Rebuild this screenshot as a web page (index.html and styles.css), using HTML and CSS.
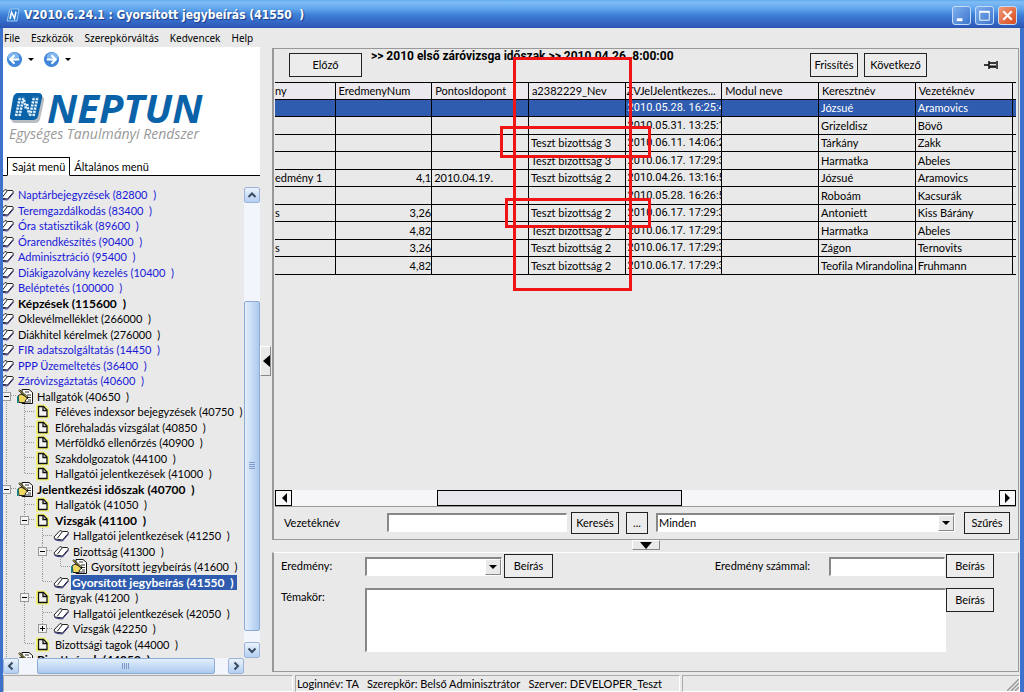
FILE: index.html
```html
<!DOCTYPE html>
<html lang="hu">
<head>
<meta charset="utf-8">
<title>Gyorsított jegybeírás</title>
<link rel="stylesheet" href="styles.css">
</head>
<body>
<svg class="defs" aria-hidden="true">
  <symbol id="book" viewBox="0 0 16 15">
    <path d="M1 9 L7 2.500 L9.500 3.500 L14.500 3.500 L15.500 5 L9.500 12 L6 11.500 L2 11 Z" fill="#fff" stroke="#222"/>
    <path d="M9.500 3.500 L4.500 10" fill="none" stroke="#222"/>
    <path d="M1.500 11.500 L5 12.500 L9.500 13 L15.500 6" fill="none" stroke="#2b2b7a"/>
  </symbol>
  <symbol id="doc" viewBox="0 0 16 15">
    <path d="M1.500 1 H9.500 L13.500 5 V14 H1.500 Z" fill="#fbfb8c" stroke="#f4f43c" stroke-dasharray="2 1"/>
    <path d="M3.500 2.500 H8.500 L12 6 V12.500 H3.500 Z" fill="#f4f4f4" stroke="#111" stroke-width="1.300"/>
    <path d="M8 2.500 V6.500 H12" fill="none" stroke="#111" stroke-width="1.300"/>
  </symbol>
  <symbol id="hand" viewBox="0 0 16 15">
    <path d="M5 .5 H12 L15.500 3.500 V14.500 H5 Z" fill="#fff" stroke="#111"/>
    <path d="M8 3 H12 M10 6 H14 M11 8.500 H14 M11 11 H14 M8 13 H14" stroke="#333"/>
    <path d="M1 7 L4 5 L8 7 L11 9 L8.500 11 L8 13.500 H2 Z" fill="#f0d860" stroke="#222"/>
    <path d="M2 1 L11 9" stroke="#111" stroke-width="2"/>
    <path d="M2 1 L10 8" stroke="#e6d84a" stroke-width=".8"/>
    <path d="M.5 7 V14" stroke="#138a8a" stroke-width="2"/>
  </symbol>
  <symbol id="mark" viewBox="0 0 36 32">
    <path d="M9 4 H31 Q36 4 35 9 L31 27 Q30 31 26 31 H6 Q2 31 3 27 Z" fill="#b9bec4"/>
    <path d="M9 1 H29 Q34 1 33 6 L29 24 Q28 28 24 28 H4 Q0 28 1 24 L4 6 Q5 1 9 1 Z" fill="#0a63a8"/>
    <path d="M7 24 L11 5 M10.500 24 L14.500 5 M15 8 L17 17 M18 12 L20 22 M21 24 L25 5 M24.500 24 L28.500 5" stroke="#e2f1fc" stroke-width="2.600" stroke-dasharray="2.200 1" fill="none"/>
  </symbol>
  <symbol id="mini" viewBox="0 0 14 14">
    <path d="M4 1 H13 L11 13 H1 Z" fill="#2f7fd0" stroke="#9cc8f4"/>
    <path d="M4 11 L5.500 4 L8.500 10.500 L10 3.500" fill="none" stroke="#fff" stroke-width="1.500"/>
  </symbol>
  <symbol id="nav" viewBox="0 0 18 18">
    <circle cx="9" cy="9" r="8" fill="#3f86d8"/>
    <ellipse cx="8" cy="6" rx="6" ry="4.500" fill="#7fb5ee"/>
    <path d="M14 9 H5 M9 4.500 L4.500 9 L9 13.500" fill="none" stroke="#fff" stroke-width="2.200"/>
  </symbol>
</svg>
<div class="window">
  <header class="titlebar">
    <svg class="app-icon"><use href="#mini"/></svg>
    <h1>V2010.6.24.1 : Gyorsított jegybeírás (41550  )</h1>
    <button class="win" aria-label="Kis méret"><svg viewBox="0 0 18 18"><path d="M4 13.500 H10" stroke="#fff" stroke-width="3"/></svg></button>
    <button class="win" aria-label="Teljes méret"><svg viewBox="0 0 18 18"><path d="M4 5 H14 V14 H4 Z" fill="none" stroke="#fff"/><path d="M3.500 5 H14.500" stroke="#fff" stroke-width="2"/></svg></button>
    <button class="win close" aria-label="Bezárás"><svg viewBox="0 0 18 18"><path d="M4.500 4.500 L13.500 13.500 M13.500 4.500 L4.500 13.500" stroke="#fff" stroke-width="2.200"/></svg></button>
  </header>
  <nav class="menubar">
    <button>File</button><button>Eszközök</button><button>Szerepkörváltás</button><button>Kedvencek</button><button>Help</button>
  </nav>
  <div class="main">
    <aside class="side">
      <div class="brand">
        <div class="history">
          <button aria-label="Vissza"><svg class="nav"><use href="#nav"/></svg></button><i class="caret"></i>
          <button aria-label="Előre"><svg class="nav flip"><use href="#nav"/></svg></button><i class="caret"></i>
        </div>
        <div class="logo"><svg class="mark"><use href="#mark"/></svg><strong>NEPTUN</strong></div>
        <p class="tagline">Egységes Tanulmányi Rendszer</p>
        <div class="tabs"><button class="tab on">Saját menü</button><button class="tab">Általános menü</button></div>
      </div>
      <div class="tree-area">
        <ul class="tree">
          <li class="root"><svg><use href="#book"/></svg><a href="#">Naptárbejegyzések (82800  )</a></li>
          <li class="root"><svg><use href="#book"/></svg><a href="#">Teremgazdálkodás (83400  )</a></li>
          <li class="root"><svg><use href="#book"/></svg><a href="#">Óra statisztikák (89600  )</a></li>
          <li class="root"><svg><use href="#book"/></svg><a href="#">Órarendkészítés (90400  )</a></li>
          <li class="root"><svg><use href="#book"/></svg><a href="#">Adminisztráció (95400  )</a></li>
          <li class="root"><svg><use href="#book"/></svg><a href="#">Diákigazolvány kezelés (10400  )</a></li>
          <li class="root"><svg><use href="#book"/></svg><a href="#">Beléptetés (100000  )</a></li>
          <li class="root plain"><svg><use href="#book"/></svg><a href="#" class="bold">Képzések (115600  )</a></li>
          <li class="root plain"><svg><use href="#book"/></svg><a href="#">Oklevélmelléklet (266000  )</a></li>
          <li class="root plain"><svg><use href="#book"/></svg><a href="#">Diákhitel kérelmek (276000  )</a></li>
          <li class="root"><svg><use href="#book"/></svg><a href="#">FIR adatszolgáltatás (14450  )</a></li>
          <li class="root"><svg><use href="#book"/></svg><a href="#">PPP Üzemeltetés (36400  )</a></li>
          <li class="root"><svg><use href="#book"/></svg><a href="#">Záróvizsgáztatás (40600  )</a></li>
          <li><i class="g t"><button class="ex" aria-label="Bezár"></button></i><svg><use href="#hand"/></svg><a href="#">Hallgatók (40650  )</a></li>
          <li><i class="g v"></i><i class="g t"></i><svg><use href="#doc"/></svg><a href="#">Féléves indexsor bejegyzések (40750  )</a></li>
          <li><i class="g v"></i><i class="g t"></i><svg><use href="#doc"/></svg><a href="#">Előrehaladás vizsgálat (40850  )</a></li>
          <li><i class="g v"></i><i class="g t"></i><svg><use href="#doc"/></svg><a href="#">Mérföldkő ellenőrzés (40900  )</a></li>
          <li><i class="g v"></i><i class="g t"></i><svg><use href="#doc"/></svg><a href="#">Szakdolgozatok (44100  )</a></li>
          <li><i class="g v"></i><i class="g e"></i><svg><use href="#doc"/></svg><a href="#">Hallgatói jelentkezések (41000  )</a></li>
          <li><i class="g t"><button class="ex" aria-label="Bezár"></button></i><svg><use href="#hand"/></svg><a href="#" class="bold">Jelentkezési időszak (40700  )</a></li>
          <li><i class="g v"></i><i class="g t"></i><svg><use href="#doc"/></svg><a href="#">Hallgatók (41050  )</a></li>
          <li><i class="g v"></i><i class="g t"><button class="ex" aria-label="Bezár"></button></i><svg><use href="#doc"/></svg><a href="#" class="bold">Vizsgák (41100  )</a></li>
          <li><i class="g v"></i><i class="g v"></i><i class="g t"></i><svg><use href="#book"/></svg><a href="#">Hallgatói jelentkezések (41250  )</a></li>
          <li><i class="g v"></i><i class="g v"></i><i class="g t"><button class="ex" aria-label="Bezár"></button></i><svg><use href="#book"/></svg><a href="#">Bizottság (41300  )</a></li>
          <li><i class="g v"></i><i class="g v"></i><i class="g v"></i><i class="g e"></i><svg><use href="#hand"/></svg><a href="#">Gyorsított jegybeírás (41600  )</a></li>
          <li><i class="g v"></i><i class="g v"></i><i class="g e"></i><svg><use href="#book"/></svg><a href="#" class="bold sel">Gyorsított jegybeírás (41550  )</a></li>
          <li><i class="g v"></i><i class="g t"><button class="ex" aria-label="Bezár"></button></i><svg><use href="#doc"/></svg><a href="#">Tárgyak (41200  )</a></li>
          <li><i class="g v"></i><i class="g v"></i><i class="g t"></i><svg><use href="#book"/></svg><a href="#">Hallgatói jelentkezések (42050  )</a></li>
          <li><i class="g v"></i><i class="g v"></i><i class="g e"><button class="ex plus" aria-label="Kinyit"></button></i><svg><use href="#book"/></svg><a href="#">Vizsgák (42250  )</a></li>
          <li><i class="g v"></i><i class="g e"></i><svg><use href="#doc"/></svg><a href="#">Bizottsági tagok (44000  )</a></li>
          <li><i class="g t"></i><svg><use href="#hand"/></svg><a href="#" class="bold">Bizottságok (44050  )</a></li>
        </ul>
        <div class="vbar">
          <button class="xp" aria-label="Fel"><svg viewBox="0 0 10 10"><path d="M1.500 7 L5 3.500 L8.500 7"/></svg></button>
          <span class="before"></span><span class="thumb"><i></i></span><span class="after"></span>
          <button class="xp" aria-label="Le"><svg viewBox="0 0 10 10"><path d="M1.500 3.500 L5 7 L8.500 3.500"/></svg></button>
        </div>
        <div class="hbar">
          <button class="xp" aria-label="Balra"><svg viewBox="0 0 10 10"><path d="M6.500 1.500 L3 5 L6.500 8.500"/></svg></button>
          <span class="before"></span><span class="thumb"><i></i></span><span class="after"></span>
          <button class="xp" aria-label="Jobbra"><svg viewBox="0 0 10 10"><path d="M3.500 1.500 L7 5 L3.500 8.500"/></svg></button>
        </div>
      </div>
    </aside>
    <div class="gutter"><button aria-label="Oldalsáv elrejtése"><svg viewBox="0 0 8 12"><path d="M8 0 L1 6 L8 12 Z"/></svg></button></div>
    <main class="content">
      <section class="panel">
        <div class="toolbar">
          <button class="btn prev">Előző</button>
          <h2>&gt;&gt; 2010 első záróvizsga időszak &gt;&gt; 2010.04.26. 8:00:00</h2>
          <button class="btn refresh">Frissítés</button>
          <button class="btn next">Következő</button>
          <svg class="pin" viewBox="0 0 14 12"><path d="M0 6 H5 M5 2 V10 M5 4 H12 M5 8 H12 M13 2 V10" fill="none" stroke="#000" stroke-width="1.400"/><path d="M6 7 H12" stroke="#000"/></svg>
        </div>
        <div class="grid">
          <table>
            <colgroup><col class="first"><col><col><col><col><col><col><col><col class="last"></colgroup>
            <thead><tr><th class="cut">ny</th><th>EredmenyNum</th><th>PontosIdopont</th><th>a2382229_Nev</th><th class="tight">ZVJelJelentkezes...</th><th>Modul neve</th><th>Keresztnév</th><th>Vezetéknév</th><th></th></tr></thead>
            <tbody>
              <tr class="on"><td></td><td></td><td></td><td></td><td>2010.05.28. 16:25:4</td><td></td><td>Józsué</td><td>Aramovics</td><td></td></tr>
              <tr><td></td><td></td><td></td><td></td><td>2010.05.31. 13:25:1</td><td></td><td>Grizeldisz</td><td>Bövö</td><td></td></tr>
              <tr><td></td><td></td><td></td><td>Teszt bizottság 3</td><td>2010.06.11. 14:06:2</td><td></td><td>Tárkány</td><td>Zakk</td><td></td></tr>
              <tr><td></td><td></td><td></td><td>Teszt bizottság 3</td><td>2010.06.17. 17:29:3</td><td></td><td>Harmatka</td><td>Abeles</td><td></td></tr>
              <tr><td>edmény 1</td><td>4,1</td><td>2010.04.19.</td><td>Teszt bizottság 2</td><td>2010.04.26. 13:16:5</td><td></td><td>Józsué</td><td>Aramovics</td><td></td></tr>
              <tr><td></td><td></td><td></td><td></td><td>2010.05.28. 16:26:5</td><td></td><td>Roboám</td><td>Kacsurák</td><td></td></tr>
              <tr><td>s</td><td>3,26</td><td></td><td>Teszt bizottság 2</td><td>2010.06.17. 17:29:3</td><td></td><td>Antoniett</td><td>Kiss Bárány</td><td></td></tr>
              <tr><td></td><td>4,82</td><td></td><td>Teszt bizottság 2</td><td>2010.06.17. 17:29:3</td><td></td><td>Harmatka</td><td>Abeles</td><td></td></tr>
              <tr><td>s</td><td>3,26</td><td></td><td>Teszt bizottság 2</td><td>2010.06.17. 17:29:3</td><td></td><td>Zágon</td><td>Ternovits</td><td></td></tr>
              <tr><td></td><td>4,82</td><td></td><td>Teszt bizottság 2</td><td>2010.06.17. 17:29:3</td><td></td><td>Teofila Mirandolina T</td><td>Fruhmann</td><td></td></tr>
            </tbody>
          </table>
          <div class="flatbar">
            <button aria-label="Balra"><svg viewBox="0 0 6 10"><path d="M6 0 L1 5 L6 10 Z"/></svg></button>
            <span class="before"></span><span class="thumb"></span><span class="after"></span>
            <button aria-label="Jobbra"><svg viewBox="0 0 6 10"><path d="M0 0 L5 5 L0 10 Z"/></svg></button>
          </div>
          <span class="hl column"></span><span class="hl first-row"></span><span class="hl second-row"></span>
        </div>
        <div class="filter">
          <label for="q">Vezetéknév</label>
          <input id="q" type="text">
          <button class="btn search">Keresés</button>
          <button class="btn dots">...</button>
          <span class="combo"><select aria-label="Szűrő"><option>Minden</option></select><i><b class="caret"></b></i></span>
          <button class="btn sieve">Szűrés</button>
        </div>
      </section>
      <div class="splitter"><button aria-label="Panel elrejtése"><svg viewBox="0 0 12 7"><path d="M0 0 H12 L6 7 Z"/></svg></button></div>
      <section class="form">
        <label for="er">Eredmény:</label>
        <div class="line">
          <span class="combo"><select id="er"><option></option></select><i><b class="caret"></b></i></span>
          <button class="btn">Beírás</button>
          <label class="num-label" for="num">Eredmény számmal:</label>
          <input id="num" type="text">
        </div>
        <button class="btn">Beírás</button>
        <label for="topic" class="top">Témakör:</label>
        <textarea id="topic"></textarea>
        <button class="btn">Beírás</button>
      </section>
    </main>
  </div>
  <footer class="status">
    <span class="pane one"></span>
    <span class="pane two">Loginnév: TA   Szerepkör: Belső Adminisztrátor   Szerver: DEVELOPER_Teszt</span>
    <span class="pane three"><svg viewBox="0 0 12 12"><path d="M0 12 L12 0 M4 12 L12 4 M8 12 L12 8" stroke="#999" stroke-width="1.500"/></svg></span>
  </footer>
</div>
</body>
</html>
```
FILE: styles.css
```css
* { box-sizing: border-box; }
html, body { height: 100%; margin: 0; }
body { background: #e9e9e9; color: #000; font: 11px/14px Lato, "Liberation Sans", sans-serif; font-variant-ligatures: none; overflow: hidden; }
button, input, select, textarea { font: inherit; font-variant-ligatures: none; color: inherit; margin: 0; padding: 0; border: 0; border-radius: 0; background: none; }
.defs { position: absolute; width: 0; height: 0; }
h1, h2, p, ul { margin: 0; padding: 0; }
a { color: inherit; text-decoration: none; }

.window { display: flex; flex-direction: column; height: 100vh; background: #e9e9e9; border-left: 3px solid #3c72cc; border-right: 4px solid #3c72cc; }

.titlebar { display: flex; align-items: center; gap: 4px; height: 28px; flex: none; margin: 0 -4px 0 -3px; padding: 2px 7px 0 6px; color: #fff; background: linear-gradient(#5fa8ee 0, #7fbdf5 2px, #5fa5ec 9px, #3d7fd6 15px, #3568c6 22px, #2a55b0 28px); }
.titlebar h1 { flex: 1; font: bold 12px/18px "DejaVu Sans Condensed", "DejaVu Sans", sans-serif; white-space: pre; text-shadow: 1px 1px 1px #1b3c86; }
.app-icon { width: 14px; height: 14px; }
.win { width: 19px; height: 19px; border: 1px solid #c4dcf8; border-radius: 3px; background: linear-gradient(135deg, #7fb0ee, #3c74cc); }
.win.close { background: linear-gradient(135deg, #f09a78, #d84a20); }
.win svg { display: block; width: 100%; height: 100%; }

.menubar { display: flex; flex: none; gap: 11px; height: 19px; padding: 0 1px; font: 10px/18px "Noto Sans", sans-serif; }

.main { display: flex; flex: 1; min-height: 0; }
.side { display: flex; flex-direction: column; width: 257px; flex: none; }
.brand { background: #fff; height: 129px; display: flex; flex-direction: column; }
.history { display: flex; align-items: center; gap: 5px; height: 24px; padding-left: 3px; }
.nav { display: block; width: 17px; height: 17px; }
.flip { transform: scaleX(-1); }
.caret { width: 0; height: 0; border: 3px solid transparent; border-top-color: #000; border-bottom: 0; }
.history .caret + button { margin-left: 4px; }
.logo { display: flex; align-items: center; gap: 2px; height: 36px; margin-top: 19px; padding-left: 6px; }
.logo strong { font: italic bold 40px/36px "Open Sans", sans-serif; color: #0a63a8; }
.mark { width: 36px; height: 32px; }
.tagline { padding-left: 6px; font: italic 14px/16px "Open Sans", sans-serif; color: #999; white-space: nowrap; }
.tabs { display: flex; align-items: flex-end; margin-top: auto; padding-left: 4px; border-bottom: 1px solid #000; }
.tab { height: 17px; padding: 0 4px; }
.tab.on { height: 19px; margin-bottom: -1px; border: 1px solid #000; border-bottom-color: #e9e9e9; background: #fff; }

.tree-area { display: grid; grid-template: minmax(0, 1fr) 16px / minmax(0, 1fr) 16px; flex: 1; min-height: 0; padding-top: 11px; }
.tree { list-style: none; overflow: hidden; }
.tree li { display: flex; align-items: center; height: 15px; margin-left: -4px; white-space: pre; }
.tree li:nth-child(even) { height: 16px; }
.tree svg { width: 16px; height: 15px; flex: none; }
.tree a { padding: 0 1px; margin-left: 3px; line-height: 15px; }
.tree .root { margin-left: -5px; color: #1818d8; }
.tree .plain { color: #000; }
.bold { font-weight: bold; font-size: 12px; }
.tree .sel { color: #fff; background: #2f5cae; margin-left: 2px; padding-right: 3px; }
.g { display: flex; align-items: center; width: 18px; height: 100%; flex: none; padding-left: 3px; background-repeat: no-repeat; }
.v, .t, .e { background-image: repeating-linear-gradient(#999 0 1px, transparent 1px 2px), repeating-linear-gradient(90deg, #999 0 1px, transparent 1px 2px); background-position: 7px 0, 8px 7px; background-size: 1px 100%, 10px 1px; }
.v { background-size: 1px 100%, 0 0; }
.e { background-size: 1px 8px, 10px 1px; }
.ex { width: 9px; height: 9px; border: 1px solid #999; background: linear-gradient(#000, #000) center / 5px 1px no-repeat #f4f4f4; }
.ex.plus { background: linear-gradient(#000, #000) center / 5px 1px no-repeat, linear-gradient(#000, #000) center / 1px 5px no-repeat #f4f4f4; }

.vbar, .hbar { display: flex; background: #f3f5fc; }
.vbar { flex-direction: column; }
.xp { display: flex; align-items: center; justify-content: center; width: 16px; height: 16px; flex: none; border: 1px solid #9db4d8; border-radius: 2px; background: linear-gradient(#eaf3fd, #b4cff0); }
.xp svg { width: 10px; height: 10px; fill: none; stroke: #3b4a63; stroke-width: 2; }
.thumb { display: flex; align-items: center; justify-content: center; border: 1px solid #8eabd6; border-radius: 2px; }
.vbar .thumb { flex: 329; background: linear-gradient(90deg, #e2effd, #abc9ee); }
.vbar .before { flex: 98; }
.vbar .after { flex: 11; }
.hbar .thumb { flex: 177; background: linear-gradient(#e2effd, #abc9ee); }
.hbar .before { flex: 18; }
.hbar .after { flex: 13; }
.vbar .thumb i { width: 6px; height: 7px; background: repeating-linear-gradient(#7f9cc8 0 1px, transparent 1px 2px); }
.hbar .thumb i { width: 7px; height: 6px; background: repeating-linear-gradient(90deg, #7f9cc8 0 1px, transparent 1px 2px); }

.gutter { display: flex; align-items: center; width: 12px; flex: none; padding-right: 1px; }
.gutter button { width: 11px; height: 30px; border: 1px solid #fff; border-right-color: #888; border-bottom-color: #888; }
.gutter svg { display: block; width: 8px; height: 12px; margin-left: 1px; }

.content { display: flex; flex-direction: column; flex: 1; min-width: 0; padding: 1px 1px 2px 0; }
.panel { display: flex; flex-direction: column; flex: 1; min-height: 0; border: 1px solid #999; border-left: 2px solid #999; }
.toolbar { display: flex; align-items: center; height: 33px; flex: none; padding: 0 20px 2px 15px; }
.btn { height: 24px; padding: 0; border: 1px solid #222; background: #ececec; white-space: nowrap; }
.prev { width: 73px; }
.refresh { width: 48px; }
.next { width: 63px; margin: 0 57px 0 6px; }
.toolbar h2 { flex: 1; align-self: flex-start; padding-left: 9px; font: bold 12px/15px Roboto, "Liberation Sans", sans-serif; white-space: nowrap; }
.pin { width: 14px; height: 12px; }

.grid { position: relative; display: flex; flex-direction: column; justify-content: space-between; flex: 1; min-height: 0; margin: 0 2px 0 1px; border-bottom: 1px solid #999; }
table { width: 100%; table-layout: fixed; border-collapse: collapse; border-top: 1px solid #000; }
.first { width: 60px; }
.last { width: 4px; }
th, td { height: 17px; padding: 0 0 0 2px; border: 1px solid #000; border-width: 0 1px 1px 0; font-weight: normal; text-align: left; line-height: 14px; white-space: nowrap; overflow: hidden; }
th { height: 17px; padding-left: 3px; background: #ece9ee; }
tbody tr:nth-child(even) td { height: 18px; }
td:first-child, th.cut { padding-left: 0; }
th.tight { padding-left: 1px; }
td:nth-child(2) { text-align: right; }
td:nth-child(5) { font-family: Roboto, "Liberation Sans", sans-serif; }
tr > :last-child { padding: 0; border-right: 0; }
.on td { color: #fff; background: #2f5cae; }
.flatbar { display: flex; height: 16px; background: #f6f6f8; }
.flatbar button { width: 17px; border: 1px solid #000; display: flex; align-items: center; justify-content: center; }
.flatbar svg { width: 6px; height: 10px; }
.flatbar .before { flex: 146; }
.flatbar .thumb { flex: 244; border: 1px solid #000; border-radius: 0; background: #e6e6ec; }
.flatbar .after { flex: 318; }
.hl { position: absolute; border: 3px solid #f01414; }
.column { left: 238px; top: -25px; width: 119px; height: 234px; }
.first-row { left: 225px; top: 44px; width: 151px; height: 32px; }
.second-row { left: 230px; top: 116px; width: 146px; height: 30px; }

.filter { display: flex; align-items: center; height: 32px; flex: none; padding: 0 8px 1px 10px; }
.filter label { width: 103px; }
.filter input { width: 180px; }
.filter .btn { height: 22px; margin-left: 4px; }
.filter .search { width: 48px; }
.filter .sieve { width: 46px; }
.filter .dots { width: 22px; margin: 0 8px 0 7px; }
.filter .combo { flex: 1; margin-right: 5px; }
input, textarea, .combo { height: 19px; min-width: 0; background: #fff; border: 1px solid #fff; border-top: 2px solid #888; border-left: 2px solid #888; }
.combo { display: flex; }
.combo select { flex: 1; min-width: 0; appearance: none; padding-left: 1px; outline: 0; }
.combo i { display: flex; align-items: center; justify-content: center; width: 16px; background: #e9e9e9; border: 1px solid #fff; border-right-color: #888; border-bottom-color: #888; }
.combo .caret { border-width: 4px 4px 0; }

.splitter { display: flex; justify-content: center; height: 12px; flex: none; }
.splitter button { width: 28px; height: 10px; border: 1px solid #fff; border-right-color: #888; border-bottom-color: #888; }
.splitter svg { display: block; width: 12px; height: 7px; margin: 0 auto; }

.form { display: grid; grid-template-columns: 84px minmax(0, 1fr) 48px; grid-template-rows: 24px 64px; gap: 10px 0; height: 120px; flex: none; align-items: center; padding: 1px 24px 0 7px; border: 1px solid #999; border-top-color: #fff; border-left-width: 2px; }
.line { display: flex; align-items: center; }
.line .combo { width: 137px; }
.line .btn { width: 49px; margin-left: 2px; }
.num-label { margin-left: auto; padding-right: 19px; }
.line input { width: 116px; margin-right: 1px; }
.form .top { align-self: start; padding-top: 2px; }
textarea { width: 100%; height: 64px; resize: none; }
textarea + .btn { align-self: start; }

.status { display: flex; gap: 2px; height: 18px; flex: none; padding-top: 1px; }
.pane { border: 1px solid #aaa; border-right-color: #fff; border-bottom-color: #fff; line-height: 16px; white-space: pre; }
.one { width: 290px; }
.two { width: 385px; padding-left: 1px; }
.three { flex: 1; display: flex; justify-content: flex-end; align-items: flex-end; }
.three svg { width: 12px; height: 12px; }
```
